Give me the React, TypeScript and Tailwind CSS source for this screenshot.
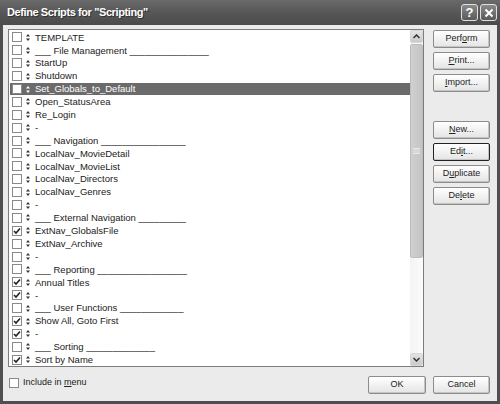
const font = { fontFamily: '"Liberation Sans", Arial, sans-serif' };

type Script = { name: string; checked?: boolean };

const scripts: Script[] = [
  { name: 'TEMPLATE' },
  { name: '___ File Management _______________' },
  { name: 'StartUp' },
  { name: 'Shutdown' },
  { name: 'Set_Globals_to_Default' },
  { name: 'Open_StatusArea' },
  { name: 'Re_Login' },
  { name: '-' },
  { name: '___ Navigation ________________' },
  { name: 'LocalNav_MovieDetail' },
  { name: 'LocalNav_MovieList' },
  { name: 'LocalNav_Directors' },
  { name: 'LocalNav_Genres' },
  { name: '-' },
  { name: '___ External Navigation _________' },
  { name: 'ExtNav_GlobalsFile', checked: true },
  { name: 'ExtNav_Archive' },
  { name: '-' },
  { name: '___ Reporting _________________' },
  { name: 'Annual Titles', checked: true },
  { name: '-', checked: true },
  { name: '___ User Functions ____________' },
  { name: 'Show All, Goto First', checked: true },
  { name: '-', checked: true },
  { name: '___ Sorting _____________' },
  { name: 'Sort by Name', checked: true },
];

function CheckBox({ checked }: { checked?: boolean }) {
  return (
    <div className="w-[10px] h-[10px] border border-[#8a8a8a] bg-white flex items-center justify-center shrink-0">
      {checked && (
        <svg width="8" height="8" viewBox="0 0 8 8">
          <path d="M1 4 L3 6 L7 1.5" fill="none" stroke="#222" strokeWidth="1.6" />
        </svg>
      )}
    </div>
  );
}

function Handle({ light }: { light?: boolean }) {
  return (
    <svg width="4" height="7" viewBox="0 0 4 7" className="shrink-0">
      <path d="M2 0 L4 2.6 L0 2.6 Z M2 7 L4 4.4 L0 4.4 Z" fill={light ? '#fff' : '#333'} />
    </svg>
  );
}

function Btn({ children, focused, className = '' }: { children: React.ReactNode; focused?: boolean; className?: string }) {
  return (
    <button
      className={`h-[18px] flex items-center justify-center text-[9px] text-[#222] rounded-[2px] bg-gradient-to-b from-white to-[#e4e4e4] shadow-[inset_-1px_-1px_0_#c4c4c4] ${
        focused ? 'border border-[#222]' : 'border border-[#8c8c8c]'
      } ${className}`}
    >
      {children}
    </button>
  );
}

export default function App() {
  return (
    <div className="w-[500px] h-[404px] bg-[#4f4f4f] flex flex-col overflow-hidden" style={font}>
      {/* title bar */}
      <div className="h-[25px] shrink-0 flex items-center justify-between pl-[7px] pr-[3px] bg-gradient-to-b from-[#6a6a6a] via-[#575757] to-[#4b4b4b]">
        <span className="text-white font-bold text-[11px] tracking-[-0.4px] [text-shadow:1px_1px_0_#333]">
          Define Scripts for "Scripting"
        </span>
        <div className="flex gap-[2px]">
          <div className="w-[17px] h-[17px] rounded-[3px] border border-[#e0e0e0] bg-gradient-to-b from-[#8a8a8a] to-[#5a5a5a] flex items-center justify-center text-white font-bold text-[13px] leading-none">
            ?
          </div>
          <div className="w-[17px] h-[17px] rounded-[3px] border border-[#e0e0e0] bg-gradient-to-b from-[#8a8a8a] to-[#5a5a5a] flex items-center justify-center">
            <svg width="10" height="10" viewBox="0 0 10 10">
              <path d="M1.5 1.5 L8.5 8.5 M8.5 1.5 L1.5 8.5" stroke="#fff" strokeWidth="2" />
            </svg>
          </div>
        </div>
      </div>

      {/* body */}
      <div className="flex-1 mx-[3px] mb-[3px] bg-[#ebebeb] flex flex-col pl-[5px] pr-[7px] pt-[4px]">
        <div className="flex gap-[9px]">
          {/* list */}
          <div className="w-[416px] h-[338px] border border-[#7c7c7c] bg-white flex">
            <div className="flex-1 flex flex-col pt-[1px] pl-[1px] overflow-hidden">
              {scripts.map((s, i) => {
                const sel = i === 4;
                return (
                  <div
                    key={i}
                    className={`h-[12.9px] shrink-0 flex items-center pl-[2px] text-[9.5px] leading-none whitespace-nowrap ${
                      sel ? 'bg-[#6b6b6b] text-white' : 'text-[#222]'
                    }`}
                  >
                    <CheckBox checked={s.checked} />
                    <div className="w-[4px]" />
                    <Handle light={sel} />
                    <span className="ml-[5px]">{s.name}</span>
                  </div>
                );
              })}
            </div>
            {/* scrollbar */}
            <div className="w-[13px] shrink-0 bg-gradient-to-r from-[#f4f4f4] to-[#fbfbfb] flex flex-col">
              <div className="h-[13px] rounded-[2px] bg-gradient-to-b from-[#e4e4e4] to-[#cacaca] border border-[#d8d8d8] flex items-center justify-center">
                <svg width="7" height="5" viewBox="0 0 7 5">
                  <path d="M0.5 4 L3.5 1 L6.5 4" fill="none" stroke="#333" strokeWidth="1.5" />
                </svg>
              </div>
              <div className="h-[214px] mt-[1px] rounded-[2px] bg-gradient-to-r from-[#d0d0d0] to-[#c4c4c4] border border-[#bdbdbd] flex items-center justify-center">
                <div className="w-[7px] h-[6px] border-y border-[#e8e8e8] bg-[#d8d8d8]" />
              </div>
              <div className="flex-1" />
              <div className="h-[13px] rounded-[2px] bg-gradient-to-b from-[#e4e4e4] to-[#cacaca] border border-[#d8d8d8] flex items-center justify-center">
                <svg width="7" height="5" viewBox="0 0 7 5">
                  <path d="M0.5 1 L3.5 4 L6.5 1" fill="none" stroke="#333" strokeWidth="1.5" />
                </svg>
              </div>
            </div>
          </div>

          {/* right buttons */}
          <div className="w-[57px] flex flex-col pt-[1px]">
            <Btn>
              Perf<u>o</u>rm
            </Btn>
            <Btn className="mt-[4px]">
              <u>P</u>rint...
            </Btn>
            <Btn className="mt-[4px]">
              <u>I</u>mport...
            </Btn>
            <Btn className="mt-[29px]">
              <u>N</u>ew...
            </Btn>
            <Btn focused className="mt-[4px]">
              Ed<u>i</u>t...
            </Btn>
            <Btn className="mt-[4px]">
              D<u>u</u>plicate
            </Btn>
            <Btn className="mt-[4px]">
              De<u>l</u>ete
            </Btn>
          </div>
        </div>

        {/* bottom row */}
        <div className="flex items-start mt-[9px]">
          <div className="flex items-center gap-[4px] pl-[1px] text-[9px] text-[#222]">
            <CheckBox />
            <span>
              Include in <u>m</u>enu
            </span>
          </div>
          <div className="flex-1" />
          <Btn className="w-[58px]">OK</Btn>
          <Btn className="w-[57px] ml-[7px]">Cancel</Btn>
        </div>
      </div>
    </div>
  );
}
